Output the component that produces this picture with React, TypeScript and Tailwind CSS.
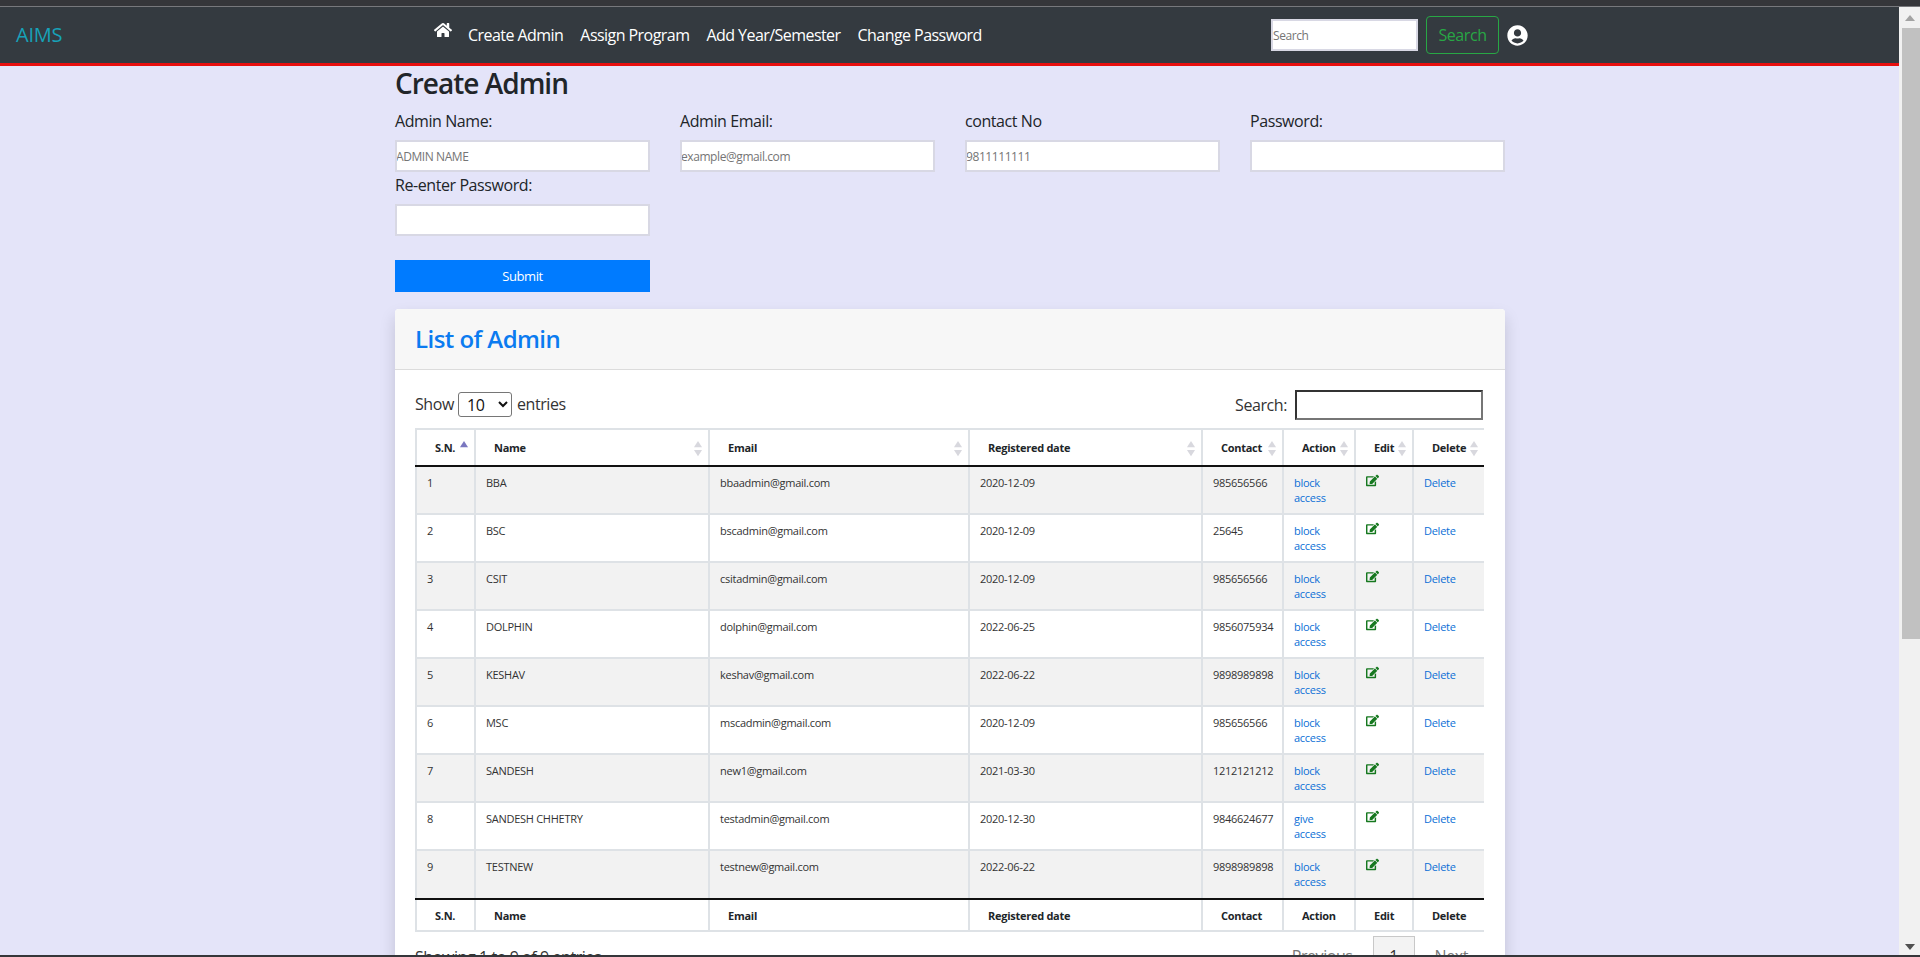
import { FaHome, FaUserCircle, FaEdit } from "react-icons/fa";

const rows = [
  ["1", "BBA", "bbaadmin@gmail.com", "2020-12-09", "985656566", "block access"],
  ["2", "BSC", "bscadmin@gmail.com", "2020-12-09", "25645", "block access"],
  ["3", "CSIT", "csitadmin@gmail.com", "2020-12-09", "985656566", "block access"],
  ["4", "DOLPHIN", "dolphin@gmail.com", "2022-06-25", "9856075934", "block access"],
  ["5", "KESHAV", "keshav@gmail.com", "2022-06-22", "9898989898", "block access"],
  ["6", "MSC", "mscadmin@gmail.com", "2020-12-09", "985656566", "block access"],
  ["7", "SANDESH", "new1@gmail.com", "2021-03-30", "1212121212", "block access"],
  ["8", "SANDESH CHHETRY", "testadmin@gmail.com", "2020-12-30", "9846624677", "give access"],
  ["9", "TESTNEW", "testnew@gmail.com", "2022-06-22", "9898989898", "block access"],
];

const headers = ["S.N.", "Name", "Email", "Registered date", "Contact", "Action", "Edit", "Delete"];
const widths = ["w-[59px]", "w-[234px]", "w-[260px]", "w-[233px]", "w-[81px]", "w-[72px]", "w-[58px]", "w-[71px]"];

function Sort({ active }: { active?: boolean }) {
  return (
    <svg viewBox="0 0 10 20" className="absolute right-[5px] top-[10px] w-[10px] h-[18px]">
      <path d="M5 1 L9.5 8 L0.5 8 Z" fill={active ? "#7a77c0" : "#d8d8de"} />
      {!active && <path d="M5 18 L9.5 11 L0.5 11 Z" fill="#d8d8de" />}
    </svg>
  );
}

function Field({ label, placeholder }: { label: string; placeholder?: string }) {
  return (
    <div className="w-[285px] px-[15px]">
      <label className="block text-[16px] leading-[24px] h-[32px] pt-[1px] text-[#212529]">{label}</label>
      <input
        placeholder={placeholder}
        className="block w-[255px] h-[32px] bg-white border-2 border-[#d8d8e4] indent-[-1px] text-[12px] outline-none placeholder:text-[#757575]"
      />
    </div>
  );
}

export default function App() {
  return (
    <div className="relative h-[957px] overflow-hidden bg-[#e4e4f9] font-['Open_Sans','Noto_Sans',sans-serif] tracking-[-0.42px] text-[#212529]">
      <div className="h-[6px] bg-[#35363a]" />
      <div className="h-px bg-[#77787c]" />
      <div className="flex w-[1899px] h-[950px]">
        <div className="w-[1899px] shrink-0 overflow-hidden">
          <nav className="h-[59px] flex items-center bg-[#343a40] border-b-[3px] border-[#e80f0f] relative">
            <a className="w-[434px] pl-4 text-[20px] tracking-[-0.2px] text-[#17a2b8] -mt-[1px]">AIMS</a>
            <FaHome className="text-white w-[18px] h-[18px] -mt-[10px]" />
            <div className="flex text-white text-[16px] ml-[16px] gap-[17px] tracking-[-0.55px]">
              <a>Create Admin</a>
              <a>Assign Program</a>
              <a>Add Year/Semester</a>
              <a>Change Password</a>
            </div>
            <div className="ml-auto mr-[371px] flex items-center">
              <input
                placeholder="Search"
                className="w-[147px] h-[32px] bg-white border-2 border-[#d8d8e4] text-[12px] outline-none placeholder:text-[#757575]"
              />
              <button className="ml-2 w-[73px] h-[38px] rounded border border-[#28a745] text-[#28a745] text-[16px]">
                Search
              </button>
              <FaUserCircle className="ml-2 text-white w-[21px] h-[21px]" />
            </div>
          </nav>
          <main className="w-[1140px] ml-[380px]">
            <h1 className="mx-[15px] text-[28px] leading-[34px] font-semibold tracking-[-1px]">Create Admin</h1>
            <div className="flex flex-wrap mt-[8px]">
              <Field label="Admin Name:" placeholder="ADMIN NAME" />
              <Field label="Admin Email:" placeholder="example@gmail.com" />
              <Field label="contact No" placeholder="9811111111" />
              <Field label="Password:" />
              <Field label="Re-enter Password:" />
            </div>
            <button className="block ml-[15px] mt-[24px] pt-[2px] w-[255px] h-[32px] bg-[#007bff] text-white text-[13px]">
              Submit
            </button>
            <section className="mx-[15px] mt-[17px] w-[1110px] rounded bg-white shadow-[0_8px_16px_rgba(0,0,0,0.15)]">
              <div className="h-[61px] px-5 flex items-center bg-[#f7f7f7] border-b border-[#dcdcdc] rounded-t">
                <h2 className="text-[24px] font-semibold tracking-[-0.55px] text-[#0b7bf0]">List of Admin</h2>
              </div>
              <div className="px-5 pt-[20px] h-[600px]">
                <div className="flex justify-between h-[38px]">
                  <div className="flex items-center h-[28px] text-[16px] text-[#333]">
                    Show
                    <select className="ml-1 mr-[5px] w-[54px] h-[25px] bg-white border border-[#767676] rounded-[3px] pl-1 text-[#111]">
                      <option>10</option>
                    </select>
                    entries
                  </div>
                  <div className="flex items-center h-[30px] mr-[2px] text-[16px] text-[#333]">
                    Search:
                    <input className="ml-2 w-[188px] h-[30px] bg-white border-2 border-t-[#333] border-l-[#333] border-r-[#767676] border-b-[#767676] outline-none" />
                  </div>
                </div>
                <table className="table-fixed w-[1067px] border-collapse text-[11px] tracking-[-0.27px] text-[#333]">
                  <thead>
                    <tr className="h-[37px] text-[#212529]">
                      {headers.map((h, i) => (
                        <th
                          key={h}
                          className={`${widths[i]} relative border-2 border-[#dee2e6] border-b-[#111] ${i === 7 ? "border-r-0" : ""} pl-[18px] pr-[18px] pt-[2px] text-left font-bold whitespace-nowrap`}
                        >
                          {h}
                          <Sort active={i === 0} />
                        </th>
                      ))}
                    </tr>
                  </thead>
                  <tbody>
                    {rows.map((r, n) => {
                      const last = n === rows.length - 1;
                      const bottom = last ? "border-b-[#111]" : "";
                      return (
                        <tr key={r[0]} className={`${last ? "h-[49px]" : "h-[48px]"} ${n % 2 === 0 ? "bg-[#f2f2f2]" : "bg-white"}`}>
                          {r.slice(0, 5).map((c, i) => (
                            <td key={i} className={`border-2 border-[#dee2e6] ${bottom} px-[10px] pt-[7px] align-top leading-[18px] whitespace-nowrap`}>
                              {c}
                            </td>
                          ))}
                          <td className={`border-2 border-[#dee2e6] ${bottom} px-[10px] pt-[8px] align-top leading-[15px] text-[#0b6fd6]`}>
                            {r[5].split(" ")[0]}
                            <br />
                            {r[5].split(" ")[1]}
                          </td>
                          <td className={`border-2 border-[#dee2e6] ${bottom} px-[10px] pt-[7px] align-top`}>
                            <FaEdit className="w-[13px] h-[13px] text-[#16781f]" />
                          </td>
                          <td className={`border-2 border-r-0 border-[#dee2e6] ${bottom} px-[10px] pt-[7px] align-top leading-[18px] text-[#0b6fd6]`}>
                            Delete
                          </td>
                        </tr>
                      );
                    })}
                  </tbody>
                  <tfoot>
                    <tr className="h-[32px] text-[#212529]">
                      {headers.map((h, i) => (
                        <th
                          key={h}
                          className={`border-2 border-[#dee2e6] ${i === 7 ? "border-r-0" : ""} pl-[18px] pt-[2px] text-left font-bold whitespace-nowrap`}
                        >
                          {h}
                        </th>
                      ))}
                    </tr>
                  </tfoot>
                </table>
                <div className="flex justify-between items-start mt-[4px] text-[16px] text-[#333]">
                  <div className="pt-[9px]">Showing 1 to 9 of 9 entries</div>
                  <div className="flex items-center mr-[17px]">
                    <span className="mr-[20px] text-[#777]">Previous</span>
                    <span className="w-[42px] h-[40px] flex items-center justify-center border border-[#c8c8c8] bg-[#f3f3f3]">1</span>
                    <span className="ml-[20px] text-[#777]">Next</span>
                  </div>
                </div>
              </div>
            </section>
          </main>
        </div>
        <aside className="w-[21px] h-[950px] shrink-0 bg-[#f1f1f1] flex flex-col items-center">
          <div className="h-[21px] flex items-center justify-center">
            <svg viewBox="0 0 10 6" className="w-[10px] h-[6px]"><path d="M5 0 L10 6 L0 6 Z" fill="#a3a3a3" /></svg>
          </div>
          <div className="w-[18px] ml-[2px] h-[611px] bg-[#c1c1c1]" />
          <div className="mt-auto h-[21px] flex items-center justify-center">
            <svg viewBox="0 0 10 6" className="w-[10px] h-[6px]"><path d="M5 6 L10 0 L0 0 Z" fill="#505050" /></svg>
          </div>
        </aside>
      </div>
      <div className="absolute left-0 right-0 bottom-0 h-[2px] bg-[#35363a]" />
    </div>
  );
}
